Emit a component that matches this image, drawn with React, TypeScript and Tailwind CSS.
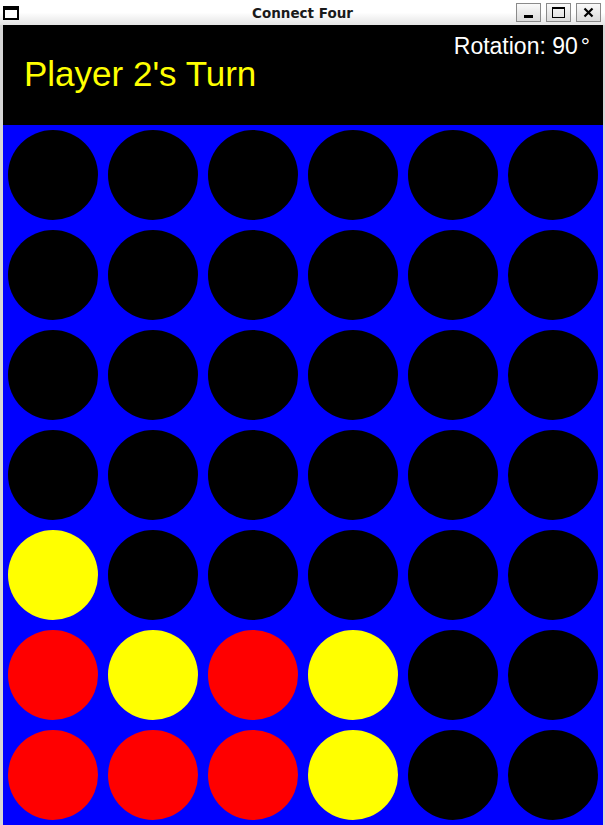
import React from 'react';

type Cell = 'E' | 'R' | 'Y';

const board: Cell[][] = [
  ['E', 'E', 'E', 'E', 'E', 'E'],
  ['E', 'E', 'E', 'E', 'E', 'E'],
  ['E', 'E', 'E', 'E', 'E', 'E'],
  ['E', 'E', 'E', 'E', 'E', 'E'],
  ['Y', 'E', 'E', 'E', 'E', 'E'],
  ['R', 'Y', 'R', 'Y', 'E', 'E'],
  ['R', 'R', 'R', 'Y', 'E', 'E'],
];

const discColor: Record<Cell, string> = {
  E: 'bg-black',
  R: 'bg-[#ff0000]',
  Y: 'bg-[#ffff00]',
};

function TitleButton({ children }: { children: React.ReactNode }) {
  return (
    <div className="w-[25px] h-[19px] border border-[#8a8a8a] bg-gradient-to-b from-[#fafafa] to-[#dcdcdc] flex items-center justify-center">
      {children}
    </div>
  );
}

export default function App() {
  return (
    <div className="w-[605px] h-[825px] bg-[#d6d6d6] flex flex-col overflow-hidden" style={{ fontFamily: '"Liberation Sans", Arial, sans-serif' }}>
      {/* Title bar */}
      <div className="h-[25px] shrink-0 bg-gradient-to-b from-white via-white to-[#e4e4e4] relative flex items-center">
        <div className="ml-[3px] w-[16px] h-[14px] border-2 border-black border-t-[4px] bg-white" />
        <div
          className="absolute left-0 right-0 top-[3px] text-center text-[13.5px] font-bold text-[#1a1a1a]"
          style={{ fontFamily: '"DejaVu Sans", sans-serif' }}
        >
          Connect Four
        </div>
        <div className="ml-auto mr-[4px] flex gap-[5px]">
          <TitleButton>
            <div className="w-[9px] h-[3px] bg-black mt-[7px]" />
          </TitleButton>
          <TitleButton>
            <div className="w-[13px] h-[11px] border border-black border-t-[2px]" />
          </TitleButton>
          <TitleButton>
            <svg width="11" height="11" viewBox="0 0 11 11">
              <path d="M1.5 1.5 L9.5 9.5 M9.5 1.5 L1.5 9.5" stroke="black" strokeWidth="2.2" />
            </svg>
          </TitleButton>
        </div>
      </div>

      {/* Content */}
      <div className="flex-1 ml-[3px] mr-[2px] flex flex-col bg-black">
        <div className="h-[100px] shrink-0 bg-black flex justify-between">
          <div className="pl-[21px] pt-[31px] text-[35px] leading-none text-[#ffff00]">Player 2's Turn</div>
          <div className="pr-[13px] pt-[10px] text-[23px] leading-none text-white">
            Rotation: 90<span className="ml-[3px]">°</span>
          </div>
        </div>
        <div className="h-[700px] bg-[#0000ff] grid grid-cols-6">
          {board.flat().map((c, i) => (
            <div key={i} className="h-[100px] p-[5px]">
              <div className={`w-full h-full rounded-full ${discColor[c]}`} />
            </div>
          ))}
        </div>
      </div>
    </div>
  );
}
